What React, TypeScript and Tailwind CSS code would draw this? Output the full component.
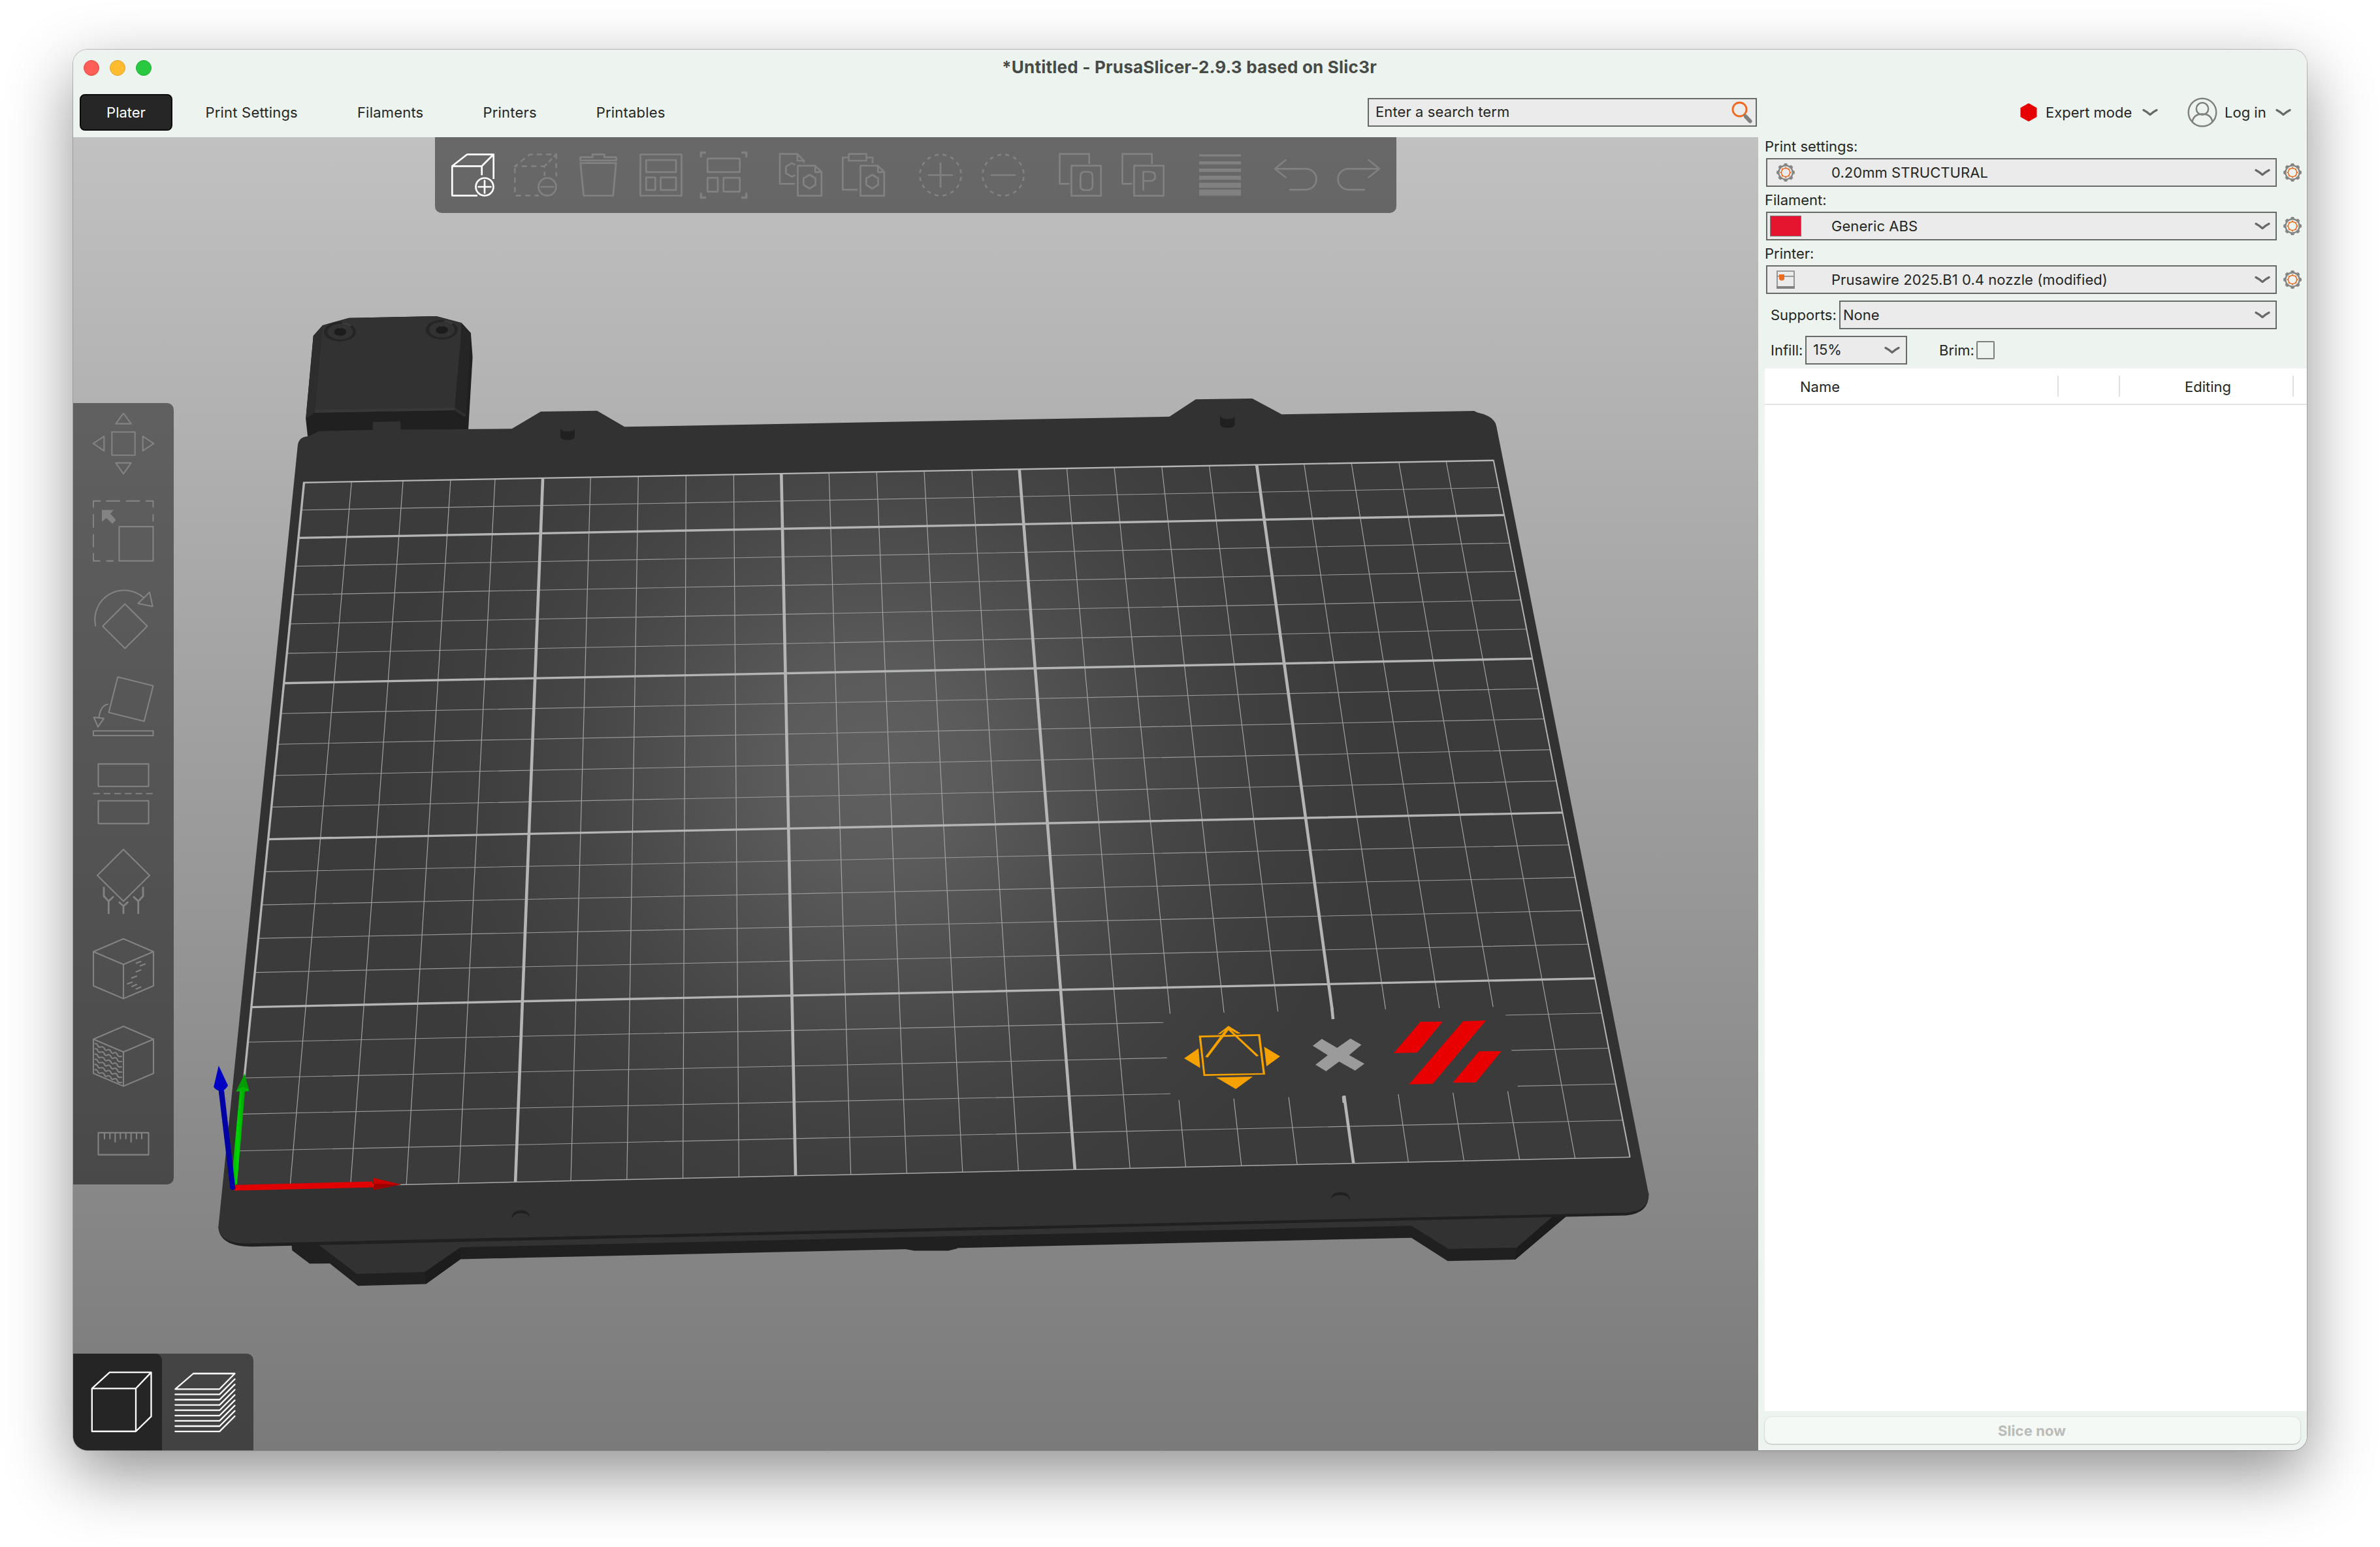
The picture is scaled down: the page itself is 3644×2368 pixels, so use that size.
import React from "react";

type Pt = [number, number];

/* ------------------------------------------------------------------ */
/* Print bed projection                                                */
/* ------------------------------------------------------------------ */

const BED_W = 250;
const BED_H = 220;
const BL: Pt = [357, 1819];
const BR: Pt = [2495.7, 1771.3];
const TR: Pt = [2286.6, 704.7];
const TL: Pt = [465, 738.7];

const solve = () => {
  const dx1 = BR[0] - TR[0];
  const dx2 = TL[0] - TR[0];
  const sx = BL[0] - BR[0] + TR[0] - TL[0];
  const dy1 = BR[1] - TR[1];
  const dy2 = TL[1] - TR[1];
  const sy = BL[1] - BR[1] + TR[1] - TL[1];
  const det = dx1 * dy2 - dx2 * dy1;
  const g = (sx * dy2 - dx2 * sy) / det;
  const h = (dx1 * sy - sx * dy1) / det;
  return {
    a: BR[0] - BL[0] + g * BR[0],
    b: TL[0] - BL[0] + h * TL[0],
    c: BL[0],
    d: BR[1] - BL[1] + g * BR[1],
    e: TL[1] - BL[1] + h * TL[1],
    f: BL[1],
    g,
    h,
  };
};
const M = solve();
const project = (x: number, y: number): Pt => {
  const u = x / BED_W;
  const v = y / BED_H;
  const w = M.g * u + M.h * v + 1;
  return [(M.a * u + M.b * v + M.c) / w, (M.d * u + M.e * v + M.f) / w];
};
const seg = (x1: number, y1: number, x2: number, y2: number) => {
  const p = project(x1, y1);
  const q = project(x2, y2);
  return `M${p[0].toFixed(1)} ${p[1].toFixed(1)}L${q[0].toFixed(1)} ${q[1].toFixed(1)}`;
};
const range = (n: number) => Array.from({ length: n }, (_, i) => i);
const MINOR_COLS = range(25)
  .filter((i) => i % 5 !== 0)
  .map((i) => (i === 2 ? 20.75 : i === 3 ? 30.7 : i * 10));
const minorCols = MINOR_COLS.map((x) => seg(x + 0.1, 0, x, BED_H)).join("");
const minorRows = range(22)
  .filter((i) => i % 5 !== 0)
  .map((i) => seg(0, i * 10, BED_W, i * 10))
  .join("");
const majorCols = [50, 100, 150, 200].map((x) => seg(x + 0.22, 0, x, BED_H)).join("");
const majorRows = [50, 100, 150, 200].map((y) => seg(0, y, BED_W, y)).join("");

function Screw({ x, y }: { x: number; y: number }) {
  return (
    <g>
      <ellipse cx={x - 0.5} cy={y} rx="24.5" ry="15" fill="#252525" />
      <path d={`M${x + 3} ${y - 14.5}q10 0 15 5l-5 2q-5-3-10-3z`} fill="#3a3a3a" />
      <ellipse cx={x} cy={y} rx="19.6" ry="12" fill="#323232" />
      <path d={`M${x - 9} ${y - 2}l5-3.5 4 1 2-1.500 7 3.500v5l-5 3.500h-8l-5-3z`} fill="#1c1c1c" />
    </g>
  );
}

function Scene() {
  return (
    <svg className="absolute inset-0 h-full w-full" viewBox="112 210 2580 2010">
      <defs>
        <radialGradient id="bedGlow" gradientUnits="userSpaceOnUse" cx="1340" cy="1180" r="760">
          <stop offset="0" stopColor="#606060" />
          <stop offset="0.2" stopColor="#5b5b5b" />
          <stop offset="0.4" stopColor="#505050" />
          <stop offset="0.6" stopColor="#464646" />
          <stop offset="0.8" stopColor="#3f3f3f" />
          <stop offset="1" stopColor="#3b3b3b" />
        </radialGradient>
        <mask id="logoGap" maskUnits="userSpaceOnUse" x="112" y="210" width="2580" height="2010">
          <rect x="112" y="210" width="2580" height="2010" fill="white" />
          <path d="M1780 1552L2303 1541L2325 1670L1793 1684Z" fill="black" />
        </mask>
        <linearGradient id="greenRod" x1="0" x2="1" y1="0" y2="0">
          <stop offset="0" stopColor="#00b400" />
          <stop offset="0.4" stopColor="#00d400" />
          <stop offset="1" stopColor="#00a000" />
        </linearGradient>
      </defs>

      {/* mounting block */}
      <path d="M534.3 486.700L668.200 484L706.600 494.300L720.900 510L723.600 546.700L716.900 660L471.300 670L468.200 641L479.800 514L494 498Z" fill="#202020" />
      <path d="M479.800 514L494 498L492 517L481.600 631.700L468.200 641Z" fill="#2d2d2d" />
      <path d="M706.600 494.300L720.900 510L713.800 635L711 638L695.900 628L704.800 520Z" fill="#252525" />
      <path d="M534.300 486.700L668.200 484L706.600 494.300L705.300 520L695.900 628L481.600 631.700L492.300 514L494 498Z" fill="#323232" />
      <path d="M481.600 631.700L695.900 628L697 624L482 627.500Z" fill="#383838" />
      <path d="M695.900 628L697 624L713.800 635L711 638Z" fill="#303030" />
      <Screw x={520.9} y={507.7} />
      <Screw x={676.7} y={504.7} />

      {/* lower tabs */}
      <path d="M446 1900L447.300 1914L474 1934.300L505 1934L548.200 1968.200L652 1965.600L705 1927.400L800 1925.300L2161 1894.700L2216.600 1930.300L2320 1928L2398 1862L2390 1850Z" fill="#202020" />
      <path d="M1386 1908H1466V1911L1452 1914.500H1400L1386 1912Z" fill="#202020" />
      <path d="M2378.400 1860L2400 1860L2320 1928L2322.200 1909.700Z" fill="#1c1c1c" />
      <path d="M650.400 1947L705 1909.200V1927.400L652 1965.600Z" fill="#1c1c1c" />
      <path d="M484.800 1903L546.400 1950L650.400 1947L705 1909.200L2161 1876.300L2217.700 1911.700L2322.200 1909.700L2382 1858Z" fill="#323232" />

      {/* base plate */}
      <path d="M334.400 1877Q335 1908 385 1908.200L2490 1860.500Q2526 1857 2524.300 1826Z" fill="#202020" />
      <path d="M455.700 683.300Q457 668 472 668Q483 663 487.900 660L570.900 658L783.800 656.300L828 630L914.200 628.700L956.200 653.300L1790.600 637.700L1830.800 611.300L1917.400 610L1962.500 634.300L2257 629L2261.600 631.300Q2288 637 2291 651.700L2524.300 1828Q2524 1854 2490.600 1856.300L373.200 1903.600Q334 1901 334.400 1877.500Z" fill="#323232" />
      <path d="M570.900 646L612.900 645L614 662H570.500Z" fill="#323232" />
      <path d="M858 655Q858 660 869 660.500Q880 660 880 655V669Q878 673.700 869 673.700Q860 673.700 858 669Z" fill="#202020" />
      <path d="M1868 636Q1869 641 1880 641.500Q1890 641 1890.600 636V650Q1889 655 1880 655Q1870 655 1868 650Z" fill="#202020" />
      <path d="M783.500 1866Q783 1853 798 1852.500Q811 1853 811.500 1865Q810 1857 798 1857Q786 1857 783.500 1866Z" fill="#202020" />
      <path d="M2037.600 1836Q2038 1825 2052.500 1825Q2067 1825 2067 1838Q2065 1829.500 2052.500 1829.300Q2040 1829.500 2037.600 1836Z" fill="#202020" />

      {/* print area */}
      <path d="M356 1819L2495.700 1771.300L2286.600 704.700L465 738.700Z" fill="url(#bedGlow)" />
      <g mask="url(#logoGap)" fill="none">
        <path d={minorCols} stroke="#a3a3a3" strokeWidth="1.2" />
        <path d={minorRows} stroke="#9a9a9a" strokeWidth="1.1" />
        <path d={majorCols} stroke="#b6b4b5" strokeWidth="4.600" />
        <path d={majorRows} stroke="#b2b5b4" strokeWidth="3.400" />
      </g>
      <path d="M2039.300 1543L2041 1560M2057 1678L2057.800 1688" stroke="#b6b4b5" strokeWidth="4.600" />
      <path d="M357 1819L465.500 738.700" stroke="#b4b4b4" strokeWidth="3.400" />
      <path d="M464 738.700L2286.600 704.700" stroke="#b4b4b4" strokeWidth="2.400" />
      <path d="M2286.600 704L2495.700 1771.300" stroke="#b4b4b4" strokeWidth="2" />
      <path d="M357 1819L2496 1771.300" stroke="#a8a8a8" strokeWidth="1.500" />

      {/* bed logos */}
      <g transform="translate(1760 1500) scale(0.5102 0.3333)">
        <g fill="#f5a200">
          <path d="M148 256L332 249L347 434L162 441ZM155 264L167 433L340 428L326 257Z" fillRule="evenodd" />
          <path d="M237 211L274 246H262L246 232L328 348L321 352L237 231L175 356L167 353L226 232L213 248L205 249Z" />
          <path d="M104 360L147 314L152 404ZM392 351L344 307L351 397ZM200 448L310 444L259 501Z" />
        </g>
        <path d="M490 302L517 271L563 312L603 269L636 298L599 345L645 385L617 416L569 375L530 419L498 389L535 346Z" fill="#9b9b9b" />
        <path d="M813 192L880 191L803 334L733 336ZM941 190L1010 186L850 477L779 479ZM989 328L1056 327L979 471L910 472Z" fill="#e80000" />
      </g>

      {/* origin axes */}
      <path d="M355 1814L570 1808.500L572 1817.500L359 1822.500Z" fill="#e00000" />
      <path d="M571.900 1803L614.300 1813L571.900 1821.600Z" fill="#c80000" />
      <path d="M571.900 1812L614.300 1813L571.900 1821.600Z" fill="#9c0000" />
      <path d="M356 1790L367.300 1668H375.300L363 1812L358 1816Z" fill="url(#greenRod)" />
      <path d="M374.600 1643.400L381.700 1670.300Q376 1664 371 1664.500Q366 1664 361.200 1670.700Z" fill="#009c00" />
      <path d="M361.200 1670.700Q366 1664 371.500 1664Q378 1664 381.700 1670.300Z" fill="#00b400" />
      <path d="M334.500 1668L342.800 1667L360.500 1819Q356 1824 352.500 1819Z" fill="#0000a4" />
      <path d="M334.800 1631.200L349 1661.600Q345 1669.500 338 1669.800Q330 1669 327.200 1663.700Z" fill="#0000c4" />
    </svg>
  );
}

/* ------------------------------------------------------------------ */
/* Top toolbar                                                         */
/* ------------------------------------------------------------------ */

function Tool({ children, active = false }: { children: React.ReactNode; active?: boolean }) {
  return (
    <svg
      className={active ? "h-[116px] w-24 text-white" : "h-[116px] w-24 text-[#818181]"}
      viewBox="0 0 96 116"
      fill="none"
      stroke="currentColor"
      strokeWidth="2.700"
      strokeLinecap="round"
      strokeLinejoin="round"
    >
      {children}
    </svg>
  );
}

const FRONT_DOC = "M43.400 43.700H70.200L79.800 53.300V89.700H43.400ZM70.200 43.700V53.300H79.800M61.500 57.500L70.500 63V73L61.500 78.500L52.300 73V63Z";

function TopToolbar() {
  return (
    <div className="absolute left-[554px] top-0 flex h-[116px] w-[1472px] rounded-b-[10px] bg-black/[0.46] pl-[10px]">
      <Tool active>
        <path d="M55 89.300H16.300V44.300H61.700V58.300M16.300 44.300L39.300 26.300H79.700V64M61.700 44.300L79.700 26.300" strokeLinecap="butt" />
        <circle cx="66" cy="76" r="13.500" />
        <path d="M56.500 76H75.500M66 66.500V85.500" />
      </Tool>
      <Tool>
        <path d="M16.300 44.300V89.300H52" strokeDasharray="6 8.500" strokeDashoffset="-4" />
        <path d="M16.300 44.300H61.700V58" strokeDasharray="6 8.500" strokeDashoffset="3" />
        <path d="M16.300 44.300L39.300 26.300H79.700V59" strokeDasharray="6 8.300" strokeDashoffset="2" />
        <path d="M61.700 44.300L79.700 26.300" strokeDasharray="5 6" strokeDashoffset="1" />
        <circle cx="66" cy="76" r="13.500" />
        <path d="M56.500 76H75.500" />
      </Tool>
      <Tool>
        <path d="M20.500 35.700V30.700H39.300V26.300H57.300V30.700H75.500V35.700ZM20.700 39.700H75.300L70.700 89.500H25.700Z" />
      </Tool>
      <Tool>
        <path d="M16.500 26.500H79.500V89.500H16.500ZM25.300 35H71V53.300H25.300ZM25.300 61.700H39.300V80.800H25.300ZM47.500 61.700H71V80.800H47.500Z" />
      </Tool>
      <Tool>
        <path d="M13.300 31V23.500H21M75 23.500H82.700V31M82.700 85V92.500H75M21 92.500H13.300V85" strokeLinecap="butt" strokeWidth="3.300" />
        <path d="M23.300 32.700H72.700V53.300H23.300ZM23.300 62.200H39V83.300H23.300ZM47.700 62.200H72.700V83.300H47.700Z" />
      </Tool>
      <div className="w-[22px]" />
      <Tool>
        <path d="M39 71.300H16V25.700H42.800L53 36V39.500M42.800 25.700V36H53" strokeLinecap="butt" />
        <path d="M38.500 42L34.500 39.700L25.300 45V55.300L34.500 60.500L38.500 58.300" />
        <path d={FRONT_DOC} />
      </Tool>
      <Tool>
        <path d="M25.200 31H16.300V80.300H39.300M52.700 31H62V40" strokeLinecap="butt" />
        <path d="M25.500 25.700H52.500V36H25.500Z" />
        <path d={FRONT_DOC} />
      </Tool>
      <div className="w-[22px]" />
      <Tool>
        <circle cx="48" cy="58" r="31.500" strokeDasharray="6 6.370" strokeDashoffset="-3" strokeLinecap="butt" />
        <path d="M30 58H66M48 40V76" />
      </Tool>
      <Tool>
        <circle cx="48" cy="58" r="31.500" strokeDasharray="6 6.370" strokeDashoffset="-3" strokeLinecap="butt" />
        <path d="M30 58H66" />
      </Tool>
      <div className="w-[22px]" />
      <Tool>
        <path d="M31.500 71.300H16.500V25.700H61.700V41" strokeLinecap="butt" />
        <path d="M34.400 43.700H79.700V89.700H34.400Z" />
        <rect x="48.300" y="53" width="18.500" height="28" rx="6" />
      </Tool>
      <Tool>
        <path d="M31.500 71.300H16.500V25.700H61.700V41" strokeLinecap="butt" />
        <path d="M34.400 43.700H79.700V89.700H34.400Z" />
        <path d="M48.500 81V53H59C63.500 53 66.700 55 66.700 60S63.500 67 59 67H48.500" />
      </Tool>
      <div className="w-[22px]" />
      <Tool>
        <path
          d="M16 26.300H80V29.500H16ZM16 37H80V41.500H16ZM16 48H80V53.300H16ZM16 59H80V65.300H16ZM16 69.700H80V77.500H16ZM16 80.300H80V89.500H16Z"
          fill="currentColor"
          stroke="none"
        />
      </Tool>
      <div className="w-[22px]" />
      <Tool>
        <path d="M30.500 35L14 48.300L30.500 61.500M14 48.300H60.500C70.500 48.300 77.400 55 77.400 64.300S70.500 80.300 60.500 80.300H37" />
      </Tool>
      <Tool>
        <path d="M61.500 35L78 48.300L61.500 61.500M78 48.300H31.500C21.500 48.300 14.600 55 14.600 64.300S21.500 80.300 31.500 80.300H55" />
      </Tool>
    </div>
  );
}

/* ------------------------------------------------------------------ */
/* Side toolbar                                                        */
/* ------------------------------------------------------------------ */

const CUBE = "M77 12L123 31.700V84L77 103.600L31 84V31.700ZM31 31.700L77 51.300L123 31.700M77 51.300V103.600";

function SideToolbar() {
  const icons: React.ReactNode[] = [
    <path d="M77 11.700L88.700 27.600H65.300ZM59.300 40.200H94.700V75.700H59.300ZM30.700 57.800L47.300 46.800V69.200ZM123.300 57.800L106.700 46.800V69.200ZM77 104.300L88.700 87.600H65.300Z" />,
    <>
      <path d="M41.300 11.900H31V21.300M51.300 11.900H71.300M81.700 11.900H101.300M111.700 11.900H122.500V21.300M31 32.800V52M31 63.500V82M31 92.300V103.600H40.700M51.300 103.600H61.300M122.500 32.800V42.500M70.500 51.100H122.500V103.600H70.500Z" />
      <path d="M44 25.400H62L57 31.500L65.300 40.500Q63 45 59.700 46.200L50.700 38L44 43.800Z" fill="currentColor" stroke="none" />
    </>,
    <path d="M79.300 35.500L113.500 69.400L79.300 103.500L45.200 69.400ZM34.300 69A45 45 0 0 1 108 25.700M117 17.500L121.700 39.200L99.300 34.700Z" />,
    <path d="M68.300 13.300L122.500 26.800L108.700 81L54.500 67.600ZM31 95.800H122.500V103H31ZM53 55Q42 57 39.500 75M31.700 75L47 76.600L38 89.700Z" />,
    <>
      <path d="M38.500 12.400H115.500V46.700H38.500ZM38.500 68.700H115.500V103.600H38.500Z" />
      <path d="M31.500 57.700H122.500" strokeDasharray="8.500 7.700" />
    </>,
    <>
      <path d="M77 9.200L117 49L77 88.500L37 49Z" />
      <path d="M47 66.600V80.800L54.300 88.600V108M62 81.200L54.300 88.600M70 89.400L77 96L84.300 89.400M77 96V108M107 66.600V80.800L99.700 88.600V108M92 81.200L99.700 88.600" strokeWidth="2.800" strokeLinecap="butt" />
    </>,
    <path d={CUBE + "M96.500 49.200L103.500 46.800M103 53.300L110 50.700M96.500 62.500L103.500 59.800M89.900 72L97 69.200M83.200 81L90.200 78.400M89.900 84.900L97 82.100M96.500 88.700L103.500 86"} />,
    <>
      <path d={CUBE} />
      {[38.5, 46.3, 54.5, 62.4, 70.4, 78.4].map((y) => (
        <path key={y} d={`M33.500 ${y}c3 0 3.500 1 4.500 3.500s3 2 4.500 1.500s4.500 0 5.500 3s3 2.500 4.500 1.500s4.500 0 5.500 3s3 2.500 4.500 1.500s4.500 0 5.500 3.500s4 2 6 2`} />
      ))}
    </>,
    <path d="M38.500 40.900H115.500V74.600H38.500ZM48 41V50M56.300 41V50M64.300 41V55M72.300 41V50M80.700 41V50M88.700 41V55M97 41V50M105 41V50" />,
  ];
  return (
    <div className="absolute left-0 top-[407px] flex h-[1196px] w-[154px] flex-col gap-[18px] rounded-r-[10px] bg-black/[0.46] pt-1 text-[#838383]">
      {icons.map((icon, i) => (
        <svg key={i} className="h-[116px] w-[154px] shrink-0" viewBox="0 0 154 116" fill="none" stroke="currentColor" strokeWidth="2.100" strokeLinejoin="round" strokeLinecap="round">
          {icon}
        </svg>
      ))}
    </div>
  );
}

function ViewSwitch() {
  return (
    <div className="absolute bottom-0 left-0 flex h-[148px] w-[276px] rounded-tr-[10px] bg-black/[0.46]">
      <div className="h-full w-[136px] rounded-tr-[10px] bg-[#252525]">
        <svg className="h-full w-full" viewBox="0 0 136 148" fill="none" stroke="white" strokeWidth="2.300" strokeLinejoin="round">
          <path d="M28.800 53.300H96V119H28.800ZM28.800 53.300L55.900 28.600H119.500V96.100L96 119M96 53.300L119.500 28.600" />
        </svg>
      </div>
      <svg className="h-full w-[140px]" viewBox="0 0 140 148" fill="none" stroke="white" strokeWidth="2.300" strokeLinejoin="round" strokeLinecap="round">
        <path d="M20.300 54.300H88.200L111.500 30.500H48Z" />
        {range(8).map((i) => (
          <path key={i} d={`M20.300 ${54.3 + (i + 1) * 8.1}H88.200L111.500 ${39 + i * 8.1}`} />
        ))}
      </svg>
    </div>
  );
}

/* ------------------------------------------------------------------ */
/* Small controls                                                      */
/* ------------------------------------------------------------------ */

function Chevron() {
  return (
    <svg className="h-4 w-6 shrink-0" viewBox="0 0 24 16" fill="none" stroke="#666966" strokeWidth="3.200" strokeLinecap="round" strokeLinejoin="round">
      <path d="M2 4.500Q7 7 12 11.500Q17 7 22 4.500" />
    </svg>
  );
}

function Gear() {
  return (
    <svg className="size-7 shrink-0" viewBox="-14 -14 28 28" fill="none">
      <circle r="10.700" stroke="#828282" strokeWidth="2.200" />
      {range(8).map((i) => (
        <path key={i} d="M-2.800 -11.500L-1.800 -13.700H1.800L2.800 -11.500Z" fill="#828282" stroke="#828282" strokeWidth="0.600" transform={`rotate(${i * 45})`} />
      ))}
      <circle r="6.600" stroke="#ed6b21" strokeWidth="1.500" />
      {range(8).map((i) => (
        <circle key={i} cx="0" cy="-7.500" r="1" fill="#ed6b21" transform={`rotate(${i * 45})`} />
      ))}
    </svg>
  );
}

function PrinterIcon() {
  return (
    <svg className="size-7" viewBox="0 0 28 28" fill="none">
      <path d="M1 1H27V25H1ZM1 9H27" stroke="#828282" strokeWidth="1.600" />
      <rect y="24" width="28" height="4" fill="#828282" />
      <path d="M4 6H12V13.500L9.500 15.500H6.500L4 13.500Z" fill="#ed6b21" />
    </svg>
  );
}

function PresetCombo({ icon, text }: { icon: React.ReactNode; text: string }) {
  return (
    <div className="ml-3 flex h-11 items-center">
      <div className="flex h-11 w-[782px] items-center border-2 border-[#666b67] bg-[#ebebeb] pr-[8px]">
        <div className="ml-[3px] flex w-[50px] justify-center">{icon}</div>
        <span className="ml-[45px] flex-1 tracking-[0.06px]">{text}</span>
        <Chevron />
      </div>
      <div className="ml-[10px] flex">
        <Gear />
      </div>
    </div>
  );
}

function Sidebar() {
  return (
    <aside className="flex h-full w-[840px] flex-col">
      <div className="flex h-8 items-center pb-1 pl-[10px]">Print settings:</div>
      <PresetCombo icon={<Gear />} text="0.20mm STRUCTURAL" />
      <div className="flex h-[38px] items-center pl-[10px] pt-[2px]">Filament:</div>
      <PresetCombo icon={<div className="h-8 w-12 border border-[#7d7d7d] bg-[#e6152f]" />} text="Generic ABS" />
      <div className="flex h-[38px] items-center pl-[10px] pt-[2px]">Printer:</div>
      <PresetCombo icon={<PrinterIcon />} text="Prusawire 2025.B1 0.4 nozzle (modified)" />

      <div className="mt-[10px] flex h-11 items-center pl-[19px]">
        <span className="w-[105px]">Supports:</span>
        <div className="flex h-11 w-[670px] items-center justify-between border-2 border-[#666b67] bg-[#ebebeb] pl-1 pr-[8px]">
          <span>None</span>
          <Chevron />
        </div>
      </div>
      <div className="mt-[10px] flex h-11 items-center pl-[19px]">
        <span className="w-[53px]">Infill:</span>
        <div className="flex h-11 w-[156px] items-center justify-between border-2 border-[#666b67] bg-[#ebebeb] pl-[10px] pr-[9px]">
          <span className="pb-[3px]">15%</span>
          <Chevron />
        </div>
        <span className="ml-[49px] w-[57px]">Brim:</span>
        <div className="size-7 rounded-[2px] border-2 border-[#7b807c]" />
      </div>

      <div className="ml-[10px] mt-[6px] flex flex-1 flex-col bg-white">
        <div className="flex h-14 items-center border-b-2 border-[#e3e4e3]">
          <span className="w-[448px] pl-[54px] pt-[2px]">Name</span>
          <div className="h-8 w-[2px] bg-[#e0e0e0]" />
          <div className="ml-[92px] h-8 w-[2px] bg-[#e0e0e0]" />
          <span className="w-[264px] pl-[99px] pt-[2px]">Editing</span>
          <div className="h-8 w-[2px] bg-[#e0e0e0]" />
        </div>
      </div>
      <div className="h-[60px] pl-[10px] pt-[9px]">
        <button className="flex h-[41px] w-[820px] items-center justify-center rounded-[10px] bg-[#f5f9f5] pr-[2px] text-[22px] font-bold tracking-[0.1px] text-[#b9bcb9] shadow-[0_0_2px_rgba(0,0,0,0.15),0_1px_2px_rgba(0,0,0,0.2)]">
          Slice now
        </button>
      </div>
    </aside>
  );
}

function Header() {
  return (
    <header className="h-[134px]">
      <div className="relative flex h-14 items-center justify-center">
        <div className="absolute left-4 top-4 flex gap-4">
          <div className="size-6 rounded-full border border-[#e2463f] bg-[#ff5f57]" />
          <div className="size-6 rounded-full border border-[#e0a023] bg-[#febc2e]" />
          <div className="size-6 rounded-full border border-[#1fad33] bg-[#28c840]" />
        </div>
        <h1 className="pb-[2px] pr-[2px] text-[26px] font-bold tracking-[0.22px] text-[#474b48]">*Untitled - PrusaSlicer-2.9.3 based on Slic3r</h1>
      </div>
      <div className="mt-3 flex h-14 items-center pl-[10px]">
        <nav className="flex gap-[10px]">
          <div className="flex h-14 w-[142px] items-center justify-center rounded-lg border-2 border-[#0c0c0c] bg-[#262626] text-white">Plater</div>
          {["Print Settings", "Filaments", "Printers", "Printables"].map((t) => (
            <div key={t} className="flex h-14 items-center px-[40.5px] tracking-[0.2px]">
              {t}
            </div>
          ))}
        </nav>
        <div className="ml-auto flex h-11 w-[596px] items-center justify-between border-2 border-[#666b67] bg-[#ebebeb] pl-[10px] pr-[3px]">
          <span className="pb-[3px] tracking-[0.1px]">Enter a search term</span>
          <svg className="h-9 w-9" viewBox="0 0 36 36" fill="none">
            <circle cx="14.500" cy="13.500" r="10.500" stroke="#ed6b21" strokeWidth="2.800" />
            <path d="M24 24.500L30.500 31.500" stroke="#808080" strokeWidth="6" strokeLinecap="round" />
            <path d="M21.500 21.500L25 25" stroke="#808080" strokeWidth="3" />
          </svg>
        </div>
        <div className="flex w-[842px] items-center pl-[403px]">
          <svg className="h-7 w-[26px]" viewBox="0 0 26 28">
            <path d="M13 0L25.500 7V21L13 28L0.500 21V7Z" fill="#e70000" />
          </svg>
          <span className="ml-[13px] w-[148px]">Expert mode</span>
          <Chevron />
          <svg className="ml-[45px] size-[46px]" viewBox="-23 -23 46 46" fill="none" stroke="#808080" strokeWidth="2.500">
            <circle r="21.300" />
            <circle cy="-5.500" r="9.200" />
            <path d="M-15.500 14.500C-14 7 -9 2.500 0 2.500S14 7 15.500 14.500" />
          </svg>
          <span className="ml-[11px] w-[78px]">Log in</span>
          <Chevron />
        </div>
      </div>
    </header>
  );
}

export default function App() {
  return (
    <div className="h-[2368px] w-[3644px] overflow-hidden bg-white pl-28 pt-[76px] font-['Inter',sans-serif] text-[22px] leading-none text-[#242624]">
      <div className="h-[2144px] w-[3420px] rounded-[22px] shadow-[0_0_0_1px_rgba(0,0,0,0.22),0_36px_100px_rgba(0,0,0,0.44)]">
        <div className="h-full w-full overflow-hidden rounded-[22px] bg-[#edf4ef]">
          <Header />
          <div className="flex h-[2010px]">
            <main className="relative h-full w-[2580px] bg-linear-to-b from-[#c1c1c1] to-[#7a7a7a]">
              <Scene />
              <TopToolbar />
              <SideToolbar />
              <ViewSwitch />
            </main>
            <Sidebar />
          </div>
        </div>
      </div>
    </div>
  );
}
